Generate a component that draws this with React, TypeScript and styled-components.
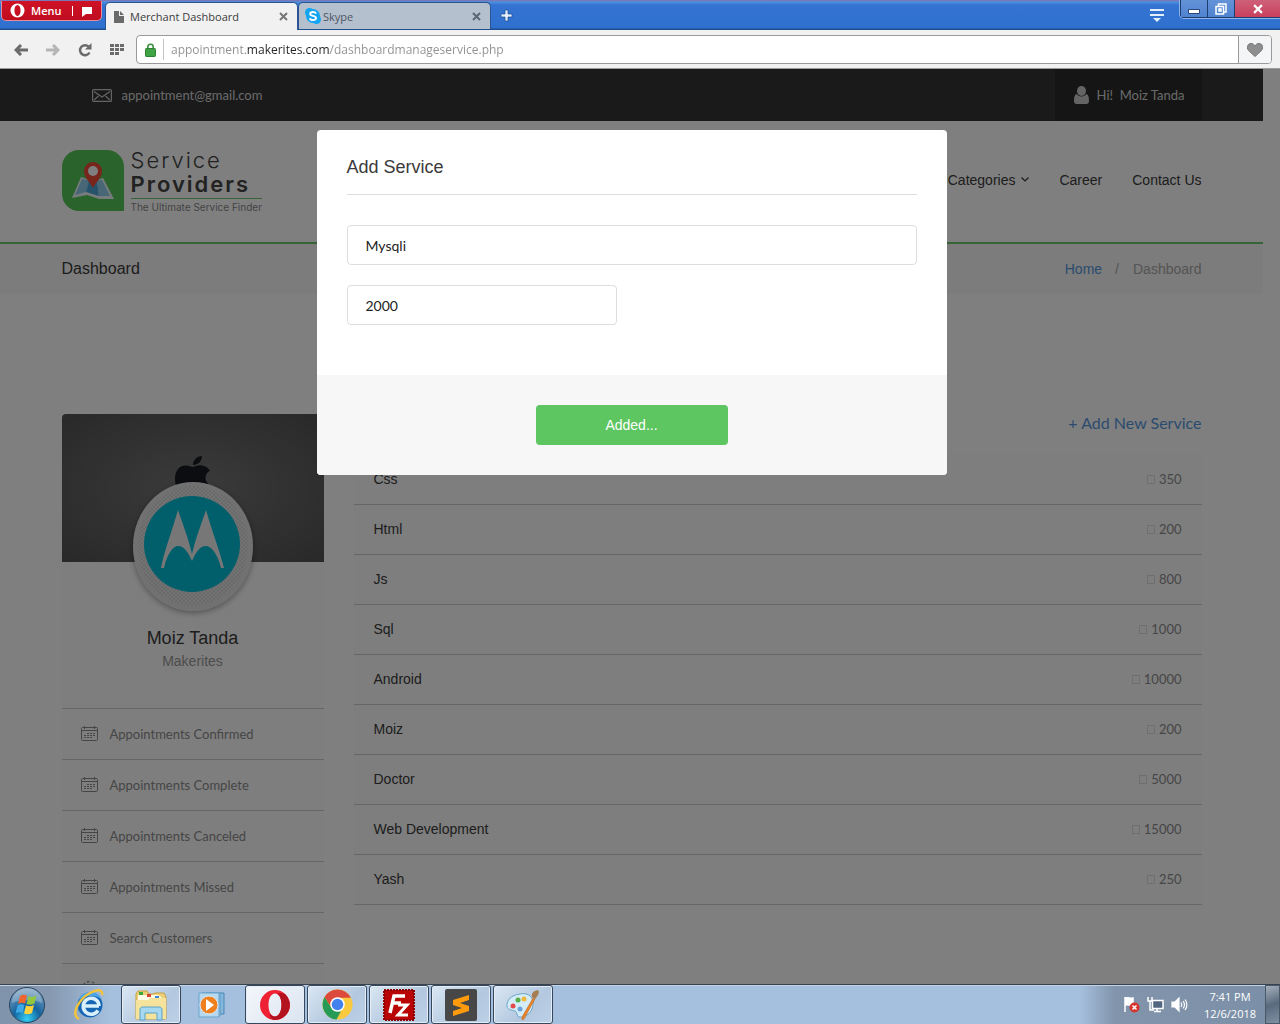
import React, { useState } from 'react';
import styled, { createGlobalStyle } from 'styled-components';

const sans = '"Liberation Sans", Arial, sans-serif';
const lato = 'Lato, "Open Sans", sans-serif';
const ui = '"Open Sans", "Noto Sans", sans-serif';

const GlobalStyle = createGlobalStyle`
  *, *::before, *::after { box-sizing: border-box; }
  body { margin: 0; background: #fff; font-family: ${sans}; font-size: 14px; color: #3a3a3a; }
  button, input { font: inherit; color: inherit; margin: 0; }
  button { padding: 0; border: 0; background: none; cursor: pointer; }
  a { color: inherit; text-decoration: none; }
  ul, ol { list-style: none; margin: 0; padding: 0; }
  h1, h2, h3, p { margin: 0; font-weight: 400; }
  svg { display: block; flex: none; }
`;

/* ---------- Desktop and browser window ---------- */

const Desktop = styled.div`
  display: flex;
  flex-direction: column;
  height: 100vh;
  overflow: hidden;
`;

const TitleBar = styled.div`
  display: flex;
  align-items: flex-end;
  height: 30px;
  flex: none;
  background: linear-gradient(#8a6fb0 0, #4a92de 2px, #3473d2 5px, #2f70cf 28px, #1d4f8f 29px);
  font-family: ${ui};
  font-size: 11px;
`;

const MenuButton = styled.button`
  display: flex;
  align-items: center;
  align-self: flex-start;
  gap: 6px;
  width: 101px;
  height: 20px;
  margin: 1px 3px 0 1px;
  padding: 0 9px 0 8px;
  border: 1px solid #e98b98;
  border-top: 0;
  border-radius: 0 0 5px 5px;
  background: linear-gradient(#cf1226, #c00c1f);
  color: #fff;
  font-weight: 600;
  svg:last-child { margin-left: auto; }
`;

const Tab = styled.div<{ $active?: boolean }>`
  display: flex;
  align-items: center;
  gap: ${p => (p.$active ? 6 : 2)}px;
  width: 193px;
  height: ${p => (p.$active ? 28 : 27)}px;
  margin-bottom: ${p => (p.$active ? 0 : 1)}px;
  padding: 0 9px 0 ${p => (p.$active ? 8 : 6)}px;
  border: 1px solid #2a5592;
  border-bottom: 0;
  border-radius: 5px 5px 0 0;
  background: ${p => (p.$active ? '#f1f1f1' : '#b5c0cf')};
  color: ${p => (p.$active ? '#3c3c3c' : '#4d5662')};
`;

const TabLabel = styled.span`flex: 1;`;

const IconButton = styled.button`
  display: flex;
  align-items: center;
  justify-content: center;
`;

const NewTab = styled(IconButton)`
  width: 30px;
  height: 29px;
`;

const WindowTools = styled.div`
  display: flex;
  align-items: flex-start;
  align-self: flex-start;
  gap: 14px;
  margin-left: auto;
`;

const TabListButton = styled(IconButton)`
  width: 16px;
  height: 30px;
`;

const WindowButtons = styled.div`
  display: flex;
  height: 19px;
  border: 1px solid #8fb6ea;
  border-top: 0;
  border-right: 0;
  border-radius: 0 0 0 5px;
  overflow: hidden;
`;

const WindowButton = styled(IconButton)<{ $close?: boolean }>`
  width: ${p => (p.$close ? 46 : 27)}px;
  border-left: 1px solid #1c3d70;
  border-bottom: 1px solid #1c3d70;
  background: ${p => (p.$close ? 'linear-gradient(#cf6079, #c8405c)' : 'linear-gradient(#6492d8, #4f83cf)')};
`;

const Toolbar = styled.div`
  display: flex;
  align-items: center;
  height: 39px;
  flex: none;
  padding: 0 8px 0 5px;
  background: #f1f1f1;
`;

const ToolButton = styled(IconButton)`
  width: 32px;
  height: 28px;
`;

const AddressBar = styled.div`
  display: flex;
  flex: 1;
  align-items: center;
  height: 29px;
  margin-left: 3px;
  border: 1px solid #9a9a9a;
  border-radius: 4px;
  background: #fff;
  overflow: hidden;
`;

const Lock = styled.span`
  display: flex;
  align-items: center;
  height: 21px;
  width: 27px;
  padding-left: 8px;
  border-right: 1px solid #c4c4c4;
`;

const AddressInput = styled.input`
  flex: 1;
  min-width: 0;
  height: 27px;
  border: 0;
  padding: 0 0 0 7px;
  outline: 0;
  font-family: ${ui};
  font-size: 12px;
  background: linear-gradient(90deg, #8f8f8f 82px, #222 82px, #222 166px, #8f8f8f 166px);
  -webkit-background-clip: text;
  background-clip: text;
  -webkit-text-fill-color: transparent;
`;

const HeartButton = styled(IconButton)`
  width: 33px;
  height: 27px;
  border-left: 1px solid #9a9a9a;
  background: #f4f5f7;
`;

/* ---------- Web page ---------- */

const Viewport = styled.div`
  position: relative;
  flex: 1;
  min-height: 0;
  overflow: hidden;
  background: #fff;
  box-shadow: 0 -1px 0 #9b9b9b;
`;

const Page = styled.div`margin-right: 17px;`;

const Container = styled.div`
  display: flex;
  max-width: 1140px;
  margin: 0 auto;
`;

const TopBar = styled.div`
  background: #353535;
  color: #d4d4d4;
  font-family: ${lato};
  font-size: 13px;
`;

const TopRow = styled(Container)`
  justify-content: space-between;
  height: 52px;
`;

const Email = styled.a`
  display: flex;
  align-items: center;
  gap: 10px;
  padding-left: 30px;
`;

const UserLink = styled.a`
  display: flex;
  align-items: center;
  gap: 8px;
  padding: 0 17px 0 19px;
  background: #2b2b2b;
  white-space: pre;
`;

const Header = styled.header`border-bottom: 2px solid #6cc96e;`;

const HeaderRow = styled(Container)`
  justify-content: space-between;
  align-items: center;
  height: 121px;
`;

const Brand = styled.a`
  display: flex;
  gap: 7px;
  font-family: Inter, sans-serif;
  color: #444;
`;

const BrandText = styled.span`
  display: flex;
  flex-direction: column;
`;

const BrandLight = styled.span`
  font-size: 22px;
  line-height: 21px;
  font-weight: 300;
  letter-spacing: 2px;
`;

const BrandBold = styled.span`
  font-size: 22px;
  line-height: 27px;
  font-weight: 600;
  letter-spacing: 2px;
`;

const Tagline = styled.span`
  border-top: 1px solid #6cc96e;
  padding-top: 2px;
  font-size: 10px;
  line-height: 12px;
  color: #888;
`;

const Nav = styled.nav`
  display: flex;
  gap: 30px;
  padding-bottom: 4px;
  a { display: flex; align-items: center; gap: 6px; }
`;

const CrumbBar = styled.div`background: #f8f8f8;`;

const CrumbRow = styled(Container)`
  justify-content: space-between;
  align-items: center;
  height: 50px;
`;

const PageTitle = styled.h1`font-size: 16px;`;

const Crumbs = styled.ol`
  display: flex;
  color: #aaa;
  li + li::before { content: '/'; margin: 0 14px 0 13px; }
`;

const CrumbLink = styled.a`color: #5798dc;`;

const Columns = styled(Container)`
  gap: 30px;
  align-items: flex-start;
  padding-top: 120px;
`;

const Sidebar = styled.aside`
  flex: 0 0 262px;
  background: #fdfdfd;
  border-radius: 4px 4px 0 0;
`;

const Cover = styled.div`
  display: flex;
  justify-content: center;
  height: 148px;
  padding-top: 42px;
  border-radius: 4px 4px 0 0;
  background: radial-gradient(#767676, #525252);
`;

const Profile = styled.div`
  display: flex;
  flex-direction: column;
  align-items: center;
  height: 146px;
`;

const Avatar = styled.span`
  display: block;
  flex: none;
  width: 120px;
  height: 129px;
  margin-top: -80px;
  border-radius: 50%;
  overflow: hidden;
  box-shadow: 0 2px 6px rgba(0, 0, 0, 0.35);
`;

const ProfileName = styled.h2`
  margin-top: 16px;
  font-size: 18px;
  line-height: 22px;
`;

const Company = styled.p`
  line-height: 24px;
  color: #999;
`;

const SideLink = styled.a`
  display: flex;
  align-items: center;
  gap: 12px;
  height: 51px;
  padding: 0 0 1px 19px;
  border-top: 1px solid #ccc;
  font-family: ${lato};
  font-size: 13px;
  color: #8c8c8c;
`;

const Main = styled.main`
  flex: 1;
  min-width: 0;
`;

const AddRow = styled.div`
  display: flex;
  justify-content: flex-end;
  height: 40px;
`;

const AddLink = styled.button`
  height: 18px;
  font-family: ${lato};
  font-size: 16px;
  line-height: 18px;
  color: #5798dc;
`;

const ServiceTable = styled.table`
  width: 100%;
  border-collapse: collapse;
  background: #fdfdfd;
  td {
    height: 50px;
    padding: 0 20px;
    border-bottom: 1px solid #ccc;
  }
`;

const Price = styled.td`
  text-align: right;
  font-family: ${lato};
  font-size: 13px;
  color: #8c8c8c;
`;

const Currency = styled.span`
  display: inline-block;
  width: 8px;
  height: 9px;
  margin-right: 4px;
  border: 1px solid #dedede;
`;

const Overlay = styled.div`
  position: absolute;
  inset: 0;
  padding: 61px 17px 0 0;
  background: rgba(0, 0, 0, 0.5);
`;

const Dialog = styled.form`
  max-width: 630px;
  margin: 0 auto;
  border-radius: 4px;
  overflow: hidden;
  background: #fff;
`;

const DialogBody = styled.div`
  display: flex;
  flex-direction: column;
  gap: 20px;
  padding: 27px 30px 50px;
`;

const DialogTitle = styled.h2`
  padding-bottom: 16px;
  margin-bottom: 10px;
  border-bottom: 1px solid #ddd;
  font-size: 18px;
  line-height: 21px;
`;

const Field = styled.input<{ $short?: boolean }>`
  width: ${p => (p.$short ? '270px' : '100%')};
  height: 40px;
  padding: 0 18px;
  border: 1px solid #ddd;
  border-radius: 4px;
  background: #fff;
  font-family: ${lato};
  font-size: 14px;
  color: #222;
`;

const DialogFooter = styled.div`
  display: flex;
  justify-content: center;
  padding: 30px;
  background: #f7f7f7;
`;

const SubmitButton = styled.button`
  width: 192px;
  height: 40px;
  border-radius: 4px;
  background: #5dc661;
  color: #fff;
`;

/* ---------- Taskbar ---------- */

const Taskbar = styled.div`
  display: flex;
  flex: none;
  gap: 2px;
  height: 40px;
  border-top: 1px solid #39434f;
  background: linear-gradient(90deg, #7f93ab 0, #8598b0 50px, #a5c0de 110px, #a5c0de calc(100% - 200px), #8194ab calc(100% - 165px), #7b8fa8 100%);
  box-shadow: inset 0 1px 0 #c3d3e4;
  color: #fff;
  font-family: ${ui};
  font-size: 11px;
`;

const TaskButton = styled(IconButton)<{ $open?: boolean; $current?: boolean }>`
  width: 60px;
  height: 39px;
  border: 1px solid ${p => (p.$open ? '#37485c' : 'transparent')};
  border-radius: 3px;
  background: ${p =>
    p.$current ? 'linear-gradient(135deg, #f4f7fb, #dbe4f0)' : p.$open ? 'linear-gradient(135deg, #dbe7f3, #b3c8df 60%, #bcd0e6)' : 'none'};
  box-shadow: ${p => (p.$open ? 'inset 0 0 0 1px #e3edf7' : 'none')};
`;

const StartButton = styled(IconButton)`
  width: 57px;
  height: 39px;
  padding-right: 3px;
`;

const Tray = styled.div`
  display: flex;
  align-items: center;
  margin-left: auto;
`;

const TrayIcons = styled.div`
  display: flex;
  gap: 7px;
  margin-right: 7px;
`;

const Clock = styled.div`
  width: 70px;
  text-align: center;
  line-height: 17px;
`;

const ShowDesktop = styled.button`
  width: 15px;
  height: 39px;
  border: 1px solid #4a5868;
  background: linear-gradient(160deg, #a4afbb, #5a6a7e 50%, #8090a4);
`;

/* ---------- Drawings ---------- */

const OperaMark = ({ size, color, rim }: { size: number; color: string; rim?: string }) => (
  <svg width={size} height={size} viewBox="0 0 32 32">
    <path fillRule="evenodd" fill={color} d="M16 1a15 15 0 1 0 0 30a15 15 0 1 0 0-30zM16 4.500c4 0 6.500 5 6.500 11.500s-2.500 11.500-6.500 11.500s-6.500-5-6.500-11.500S12 4.500 16 4.500z" />
    {rim && <path fill={rim} d="M16 31a15 15 0 0 0 10-26a13 13 0 0 0-8-.500c3 1.500 4.500 6 4.500 11.500s-2.500 11.500-6.500 11.500c-2 0-4-1-5-3c-1 4 2 6.500 5 6.500z" />}
  </svg>
);

const Cross = ({ color = '#777', size = 9 }) => (
  <svg width={size} height={size} viewBox="0 0 9 9"><path d="M1 1l7 7M8 1l-7 7" stroke={color} strokeWidth="2" /></svg>
);

const Arrow = ({ flip, color }: { flip?: boolean; color: string }) => (
  <svg width="14" height="12" viewBox="0 0 14 12">
    <path d={flip ? 'M0 6h12M7 1l5 5l-5 5' : 'M14 6H2M7 1L2 6l5 5'} fill="none" stroke={color} strokeWidth="3" />
  </svg>
);

const Reload = () => (
  <svg width="14" height="14" viewBox="0 0 14 14">
    <path d="M11.500 9.500A5 5 0 1 1 10.500 3.500" fill="none" stroke="#6b6b6b" strokeWidth="2.500" />
    <path d="M13.500 0v6.500H7z" fill="#6b6b6b" />
  </svg>
);

const SpeedDial = () => (
  <svg width="14" height="11" viewBox="0 0 14 11" fill="#6b6b6b">
    {[0, 4, 8].map(y => [0, 5, 10].filter(x => y < 8 || x < 10).map(x => <rect key={`${x}-${y}`} x={x} y={y} width="4" height="3" />))}
  </svg>
);

const PadLock = () => (
  <svg width="11" height="14" viewBox="0 0 11 14">
    <path d="M2.800 7V4a2.700 2.700 0 0 1 5.400 0V7" fill="none" stroke="#3d9040" strokeWidth="1.600" />
    <rect x="0.500" y="5.500" width="10" height="8" rx="0.800" fill="#3fa544" stroke="#2e7f33" />
  </svg>
);

const Heart = () => (
  <svg width="16" height="14" viewBox="0 0 16 14">
    <path d="M8 13.500L1.500 7.500C-1 4 1 .500 4 .500c2 0 3.300 1 4 2.500C8.700 1.500 10 .500 12 .500c3 0 5 3.500 2.500 7z" fill="#8e8e8e" stroke="#777" />
  </svg>
);

const PageIcon = () => (
  <svg width="10" height="12" viewBox="0 0 10 12"><path d="M0 0h5v5h5v7H0z" fill="#6a6a6a" /><path d="M6 0l4 4H6z" fill="#6a6a6a" /></svg>
);

const SkypeIcon = () => (
  <svg width="16" height="16" viewBox="0 0 16 16">
    <circle cx="8" cy="8" r="7" fill="#12a5f0" /><circle cx="4.500" cy="4.500" r="4.500" fill="#12a5f0" /><circle cx="11.500" cy="11.500" r="4.500" fill="#12a5f0" />
    <path d="M11 5.600C10.500 4.300 9.300 4 8 4C6.200 4 5.200 4.800 5.200 5.900C5.200 8.400 11 7.200 11 10c0 1.300-1.300 2.100-3 2.100S5.200 11.500 4.900 10.200" fill="none" stroke="#fff" strokeWidth="1.900" />
  </svg>
);

const MailIcon = () => (
  <svg width="20" height="13" viewBox="0 0 20 13" fill="none" stroke="#c9c9c9" strokeWidth="1.200">
    <rect x="0.600" y="0.600" width="18.800" height="11.800" rx="1" /><path d="M2 2.500l8 5.500l8-5.500M2 11l4.500-4M18 11l-4.500-4" />
  </svg>
);

const UserIcon = () => (
  <svg width="15" height="18" viewBox="0 0 15 18" fill="#c9c9c9">
    <ellipse cx="7.500" cy="5" rx="4.500" ry="5" /><path d="M2.500 8c2.500 3.300 7.500 3.300 10 0c2 .500 2.500 4 2.500 7c0 2-1 3-2.500 3h-10C1 18 0 17 0 15c0-3 .500-6.500 2.500-7z" />
  </svg>
);

const MapLogo = () => (
  <svg width="62" height="62" viewBox="0 0 62 62">
    <path d="M17 0h28a17 17 0 0 1 17 17v44H17A17 17 0 0 1 0 44V17A17 17 0 0 1 17 0z" fill="#56c65a" />
    <path d="M19 27L10 48l15-3l12 4l15 0L41 28l-9 3z" fill="#eef6fa" />
    <path d="M20 29l-7 16l11-3l3-12z" fill="#8fcdec" /><path d="M27 30l-3 12l13 4l-2-16z" fill="#4da7d6" /><path d="M35 30l2 16l11 0l-8-16z" fill="#8fcdec" />
    <path d="M31 38C27 31 22 27 22 21a9 9 0 0 1 18 0c0 6-5 10-9 17z" fill="#f04a38" /><circle cx="31" cy="21" r="5" fill="#fff" />
  </svg>
);

const Apple = () => (
  <svg width="36" height="42" viewBox="0 0 36 42" fill="#181b20">
    <path d="M18 11c3-1 6-2 9-1.500c4 .500 6 2.500 8 5c-5 3-6 9-2 13c-2 8-6 14-10 14c-3 0-4-1-6-1s-4 1-6 1C5 41 0 32 0 23C0 13 6 9 11 9.500c3 .300 5 1.500 7 1.500z" />
    <path d="M18 9c0-5 4-9 9-9c0 5-4 9-9 9z" />
  </svg>
);

const Motorola = () => (
  <svg width="120" height="129" viewBox="0 0 120 129" role="img" aria-label="Motorola">
    <defs>
      <pattern id="checks" width="4" height="4" patternUnits="userSpaceOnUse">
        <rect width="4" height="4" fill="#e6e6e6" /><rect width="2" height="2" fill="#d4d4d4" /><rect x="2" y="2" width="2" height="2" fill="#d4d4d4" />
      </pattern>
    </defs>
    <rect width="120" height="129" fill="#e2e2e2" />
    <ellipse cx="60" cy="64" rx="55" ry="60" fill="url(#checks)" />
    <ellipse cx="59" cy="62" rx="48" ry="48" fill="#00bfd6" />
    <path d="M45 28C38 52 31 70 28 86h3c3-14 9-22 14-22c6 0 10 6 14 15c4-9 8-15 14-15c5 0 12 8 15 22h3C87 70 80 52 73 28c-5 15-10 27-14 44C55 55 50 43 45 28z" fill="#eee" />
  </svg>
);

const Calendar = () => (
  <svg width="17" height="15" viewBox="0 0 17 15" fill="none" stroke="#8a8a8a">
    <rect x="0.500" y="1.500" width="16" height="13" rx="1" /><path d="M0 4.500h17M3.500 0v3M13.500 0v3" />
    <path d="M6 7.500h8M3 9.500h11M3 11.500h9" strokeDasharray="2 1" />
  </svg>
);

const Gear = () => (
  <svg width="17" height="17" viewBox="0 0 17 17" fill="none" stroke="#8fa58f" strokeWidth="1.500">
    <circle cx="8.500" cy="8.500" r="3" /><circle cx="8.500" cy="8.500" r="7" strokeDasharray="3 2" />
  </svg>
);

const StartOrb = () => (
  <svg width="38" height="38" viewBox="0 0 38 38">
    <defs><radialGradient id="orb" cx="50%" cy="90%" r="85%"><stop offset="0" stopColor="#35d0f5" /><stop offset="0.450" stopColor="#13649f" /><stop offset="1" stopColor="#7d9fbe" /></radialGradient></defs>
    <circle cx="19" cy="19" r="17.500" fill="url(#orb)" stroke="#28415c" />
    <path d="M4 17a15 15 0 0 1 30 0c-9-4-21-4-30 0z" fill="#fff" opacity="0.250" />
    <path d="M12 10c3-2 5-1.500 7-.500l-2 8c-2-1-5-1-7 .500z" fill="#f0652f" />
    <path d="M20.500 10c3 1.500 5 1 8-.500l-2 8c-3 1.500-5 1.500-8 .500z" fill="#93c83e" />
    <path d="M9.500 19.500c2-1.500 5-1.500 7-.500l-2 8c-2-1-5-1-7 .500z" fill="#3fa9e8" />
    <path d="M18 19.500c3 1 5 1 8-.500l-2 8c-3 1.500-5 1.500-8 .500z" fill="#fdd23c" />
  </svg>
);

const Explorer = () => (
  <svg width="32" height="32" viewBox="0 0 32 32">
    <circle cx="17" cy="16" r="12.500" fill="#1565b5" /><path d="M5.500 11a12.500 12.500 0 0 1 23-1c-6-4-16-4-23 1z" fill="#4da6e4" />
    <path d="M11 17h15M25 21.500A8 8 0 1 1 25.500 14c.500 1 .500 2 .500 3" fill="none" stroke="#d9effb" strokeWidth="3.500" />
    <path d="M6 30C-3 26 6 10 17 4c7-4 13-4 12 2" fill="none" stroke="#f2c33c" strokeWidth="2.500" />
  </svg>
);

const Folder = () => (
  <svg width="34" height="32" viewBox="0 0 34 32">
    <path d="M2 5l2-3h9l2 3h4l2-1h9l2 4v22H2z" fill="#ecd079" stroke="#c6a03e" />
    <path d="M4 6h20l7 5v4H4z" fill="#fffbe6" /><path d="M5 3h4v3H5z" fill="#38a83a" /><path d="M13 5h4v3h-4z" fill="#d84432" /><path d="M21 7h4v3h-4z" fill="#3f86d6" />
    <path d="M2 11h12l2-2h16v21H2z" fill="#f5e39b" />
    <path d="M6 31V21c0-2 1-3 3-3h16c2 0 3 1 3 3v10h-5v-7H11v7z" fill="#a6d8f0" stroke="#5aa2c8" />
  </svg>
);

const MediaPlayer = () => (
  <svg width="30" height="26" viewBox="0 0 30 26">
    <path d="M8 1h18v21H8z" fill="#83b7dc" stroke="#4f87b3" /><path d="M4 1h18v23H4z" fill="#a0cbe8" stroke="#5e97c2" /><path d="M1 1h20v24H1z" fill="#b7d9f0" stroke="#6aa3cc" />
    <circle cx="11" cy="13" r="9" fill="#f07f1e" stroke="#d9e8f4" /><path d="M8 7l8 6l-8 6z" fill="#fff" />
  </svg>
);

const Chrome = () => (
  <svg width="31" height="31" viewBox="0 0 32 32">
    <circle cx="16" cy="16" r="15.500" fill="#fbc93e" />
    <path d="M2.600 8.300A15.500 15.500 0 0 1 29.400 8.300L29.800 9H16L10 19.500z" fill="#dc4a3d" />
    <path d="M2.600 8.300l7.300 11.200l6.100 3.500h3.500l-4.500 8.500A15.500 15.500 0 0 1 2.600 8.300z" fill="#279a55" />
    <circle cx="16" cy="16" r="7.500" fill="#fff" /><circle cx="16" cy="16" r="6" fill="#4382ee" />
  </svg>
);

const FileZilla = () => (
  <svg width="32" height="32" viewBox="0 0 32 32">
    <rect x="1" y="1" width="30" height="30" fill="#b80404" stroke="#8b0000" strokeWidth="2" strokeDasharray="2 1" />
    <path d="M7 24L11 7h11M9 14h9" fill="none" stroke="#fff" strokeWidth="3.500" /><path d="M15 16h9L15 26h10" fill="none" stroke="#fff" strokeWidth="3" />
  </svg>
);

const Sublime = () => (
  <svg width="32" height="32" viewBox="0 0 32 32">
    <rect width="32" height="32" rx="2" fill="#474747" /><path d="M8 11l16-5v5l-9 3l9 3v5L8 27v-5l9-3l-9-3z" fill="#ff9a0d" />
  </svg>
);

const Paint = () => (
  <svg width="34" height="32" viewBox="0 0 34 32">
    <path d="M14 5c9-2 14 4 13 11c-1 8-8 13-14 12c-3-1-1-5-4-6S0 21 1 15S7 6 14 5z" fill="#d3ecf8" stroke="#6ba6c8" />
    <circle cx="7" cy="17" r="2.500" fill="#e14b4b" /><circle cx="12" cy="11" r="2.500" fill="#56b04a" /><circle cx="18" cy="10" r="2.500" fill="#f0b73a" /><circle cx="14" cy="20" r="2.500" fill="#6ea3d8" />
    <path d="M27 9l2 1L18 30l-2 1v-3z" fill="#e8842c" stroke="#b86318" strokeWidth="0.500" /><path d="M26 8c-1-3 1-6 6-7c2 2 0 6-3 9z" fill="#a67c52" />
  </svg>
);

const FlagIcon = () => (
  <svg width="17" height="17" viewBox="0 0 17 17">
    <path d="M2 1v15M3 2c3-1 4 1 7 0v7c-3 1-4-1-7 0z" fill="#fff" stroke="#fff" strokeWidth="1.500" />
    <circle cx="11.500" cy="11.500" r="5" fill="#d6332c" /><path d="M9.500 9.500l4 4M13.500 9.500l-4 4" stroke="#fff" strokeWidth="1.500" />
  </svg>
);

const NetworkIcon = () => (
  <svg width="17" height="17" viewBox="0 0 17 17" fill="none" stroke="#fff" strokeWidth="1.500">
    <rect x="5.500" y="4.500" width="10.500" height="8" fill="#53667f" /><path d="M10 13v2.500M7 15.500h7M1 1v4h4V1M3 5v9h4" />
  </svg>
);

const VolumeIcon = () => (
  <svg width="17" height="17" viewBox="0 0 17 17" fill="none" stroke="#fff" strokeWidth="1.200">
    <path d="M1 6h3l4-4v13l-4-4H1z" fill="#fff" /><path d="M10 6.500c1 1.500 1 3 0 4.500M12 5c2 2.500 2 5 0 7.500M14 3.500c2.500 3.500 2.500 7 0 10.500" />
  </svg>
);

const sideItems = ['Appointments Confirmed', 'Appointments Complete', 'Appointments Canceled', 'Appointments Missed', 'Search Customers'];

const services: [string, number][] = [
  ['Css', 350], ['Html', 200], ['Js', 800], ['Sql', 1000], ['Android', 10000],
  ['Moiz', 200], ['Doctor', 5000], ['Web Development', 15000], ['Yash', 250],
];

function BrowserChrome() {
  return (
    <>
      <TitleBar>
        <MenuButton>
          <OperaMark size={15} color="#fff" />
          Menu
          <svg width="26" height="12" viewBox="0 0 26 12" fill="#fff"><path d="M5 1h1v10H5zM15 2h10v7h-6l-4 3z" /></svg>
        </MenuButton>
        <Tab $active>
          <PageIcon />
          <TabLabel>Merchant Dashboard</TabLabel>
          <IconButton aria-label="Close tab"><Cross /></IconButton>
        </Tab>
        <Tab>
          <SkypeIcon />
          <TabLabel>Skype</TabLabel>
          <IconButton aria-label="Close tab"><Cross color="#5c6674" /></IconButton>
        </Tab>
        <NewTab aria-label="New tab">
          <svg width="13" height="13" viewBox="0 0 13 13"><path d="M5 1h3v4h4v3H8v4H5V8H1V5h4z" fill="#e4effc" stroke="#1d4f8f" strokeWidth="0.700" /></svg>
        </NewTab>
        <WindowTools>
          <TabListButton aria-label="Tab menu">
            <svg width="14" height="13" viewBox="0 0 14 13" fill="#e4effc"><path d="M0 0h14v2H0zM0 5h14v2H0zM3 9h8l-4 4z" /></svg>
          </TabListButton>
          <WindowButtons>
            <WindowButton aria-label="Minimize"><svg width="12" height="12" viewBox="0 0 12 12"><path d="M0.500 6.500h11v4H.500z" fill="#fff" stroke="#27477a" /></svg></WindowButton>
            <WindowButton aria-label="Restore"><svg width="12" height="12" viewBox="0 0 12 12" fill="none" stroke="#fff" strokeWidth="1.500"><path d="M3.500 3V1H11v8H9M1 3.500h7.500V11H1zM4 6h2v2H4z" /></svg></WindowButton>
            <WindowButton $close aria-label="Close"><Cross color="#fff" size={10} /></WindowButton>
          </WindowButtons>
        </WindowTools>
      </TitleBar>
      <Toolbar>
        <ToolButton aria-label="Back"><Arrow color="#6b6b6b" /></ToolButton>
        <ToolButton aria-label="Forward"><Arrow flip color="#b5b5b5" /></ToolButton>
        <ToolButton aria-label="Reload"><Reload /></ToolButton>
        <ToolButton aria-label="Speed dial"><SpeedDial /></ToolButton>
        <AddressBar>
          <Lock><PadLock /></Lock>
          <AddressInput aria-label="Address" defaultValue="appointment.makerites.com/dashboardmanageservice.php" />
          <HeartButton aria-label="Bookmark"><Heart /></HeartButton>
        </AddressBar>
      </Toolbar>
    </>
  );
}

function DashboardPage() {
  return (
    <Page>
      <TopBar>
        <TopRow>
          <Email href="#mail"><MailIcon />appointment@gmail.com</Email>
          <UserLink href="#account"><UserIcon />{'Hi!  Moiz Tanda'}</UserLink>
        </TopRow>
      </TopBar>
      <Header>
        <HeaderRow>
          <Brand href="#home">
            <MapLogo />
            <BrandText>
              <BrandLight>Service</BrandLight>
              <BrandBold>Providers</BrandBold>
              <Tagline>The Ultimate Service Finder</Tagline>
            </BrandText>
          </Brand>
          <Nav>
            <a href="#categories">
              Categories
              <svg width="8" height="5" viewBox="0 0 8 5"><path d="M0.500 0.500L4 4l3.500-3.500" fill="none" stroke="#333" strokeWidth="1.200" /></svg>
            </a>
            <a href="#career">Career</a>
            <a href="#contact">Contact Us</a>
          </Nav>
        </HeaderRow>
      </Header>
      <CrumbBar>
        <CrumbRow>
          <PageTitle>Dashboard</PageTitle>
          <Crumbs>
            <li><CrumbLink href="#home">Home</CrumbLink></li>
            <li>Dashboard</li>
          </Crumbs>
        </CrumbRow>
      </CrumbBar>
      <Columns>
        <Sidebar>
          <Cover><Apple /></Cover>
          <Profile>
            <Avatar><Motorola /></Avatar>
            <ProfileName>Moiz Tanda</ProfileName>
            <Company>Makerites</Company>
          </Profile>
          <ul>
            {sideItems.map(item => (
              <li key={item}><SideLink href="#section"><Calendar />{item}</SideLink></li>
            ))}
            <li><SideLink href="#settings" aria-label="Settings"><Gear /></SideLink></li>
          </ul>
        </Sidebar>
        <Main>
          <AddRow><AddLink>+ Add New Service</AddLink></AddRow>
          <ServiceTable>
            <tbody>
              {services.map(([name, price]) => (
                <tr key={name}><td>{name}</td><Price><Currency />{price}</Price></tr>
              ))}
            </tbody>
          </ServiceTable>
        </Main>
      </Columns>
    </Page>
  );
}

function AddServiceDialog() {
  const [name, setName] = useState('Mysqli');
  const [price, setPrice] = useState('2000');
  return (
    <Overlay>
      <Dialog role="dialog" aria-labelledby="dialog-title" onSubmit={e => e.preventDefault()}>
        <DialogBody>
          <DialogTitle id="dialog-title">Add Service</DialogTitle>
          <Field aria-label="Service name" value={name} onChange={e => setName(e.target.value)} />
          <Field $short aria-label="Price" value={price} onChange={e => setPrice(e.target.value)} />
        </DialogBody>
        <DialogFooter><SubmitButton type="submit">Added...</SubmitButton></DialogFooter>
      </Dialog>
    </Overlay>
  );
}

function WindowsTaskbar() {
  return (
    <Taskbar>
      <StartButton aria-label="Start"><StartOrb /></StartButton>
      <TaskButton aria-label="Internet Explorer"><Explorer /></TaskButton>
      <TaskButton $open aria-label="Windows Explorer"><Folder /></TaskButton>
      <TaskButton aria-label="Media Player"><MediaPlayer /></TaskButton>
      <TaskButton $open $current aria-label="Opera"><OperaMark size={32} color="#ee2233" rim="#b3121f" /></TaskButton>
      <TaskButton $open aria-label="Chrome"><Chrome /></TaskButton>
      <TaskButton $open aria-label="FileZilla"><FileZilla /></TaskButton>
      <TaskButton $open aria-label="Sublime Text"><Sublime /></TaskButton>
      <TaskButton $open aria-label="Paint"><Paint /></TaskButton>
      <Tray>
        <TrayIcons>
          <FlagIcon />
          <NetworkIcon />
          <VolumeIcon />
        </TrayIcons>
        <Clock>7:41 PM<br />12/6/2018</Clock>
        <ShowDesktop aria-label="Show desktop" />
      </Tray>
    </Taskbar>
  );
}

export default function App() {
  return (
    <Desktop>
      <GlobalStyle />
      <BrowserChrome />
      <Viewport>
        <DashboardPage />
        <AddServiceDialog />
      </Viewport>
      <WindowsTaskbar />
    </Desktop>
  );
}
